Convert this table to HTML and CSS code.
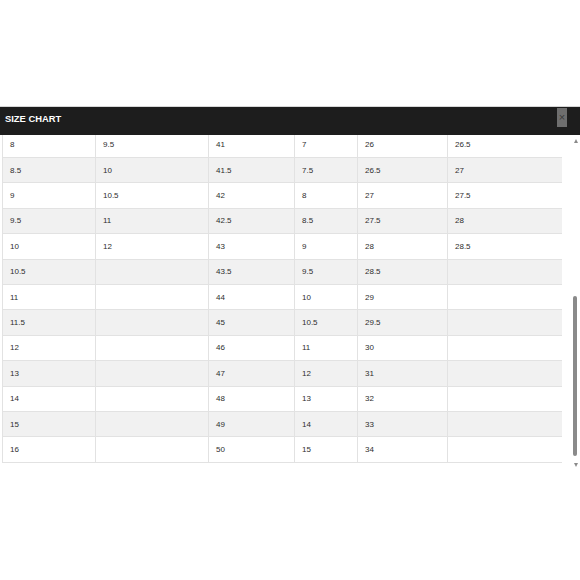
FILE: index.html
```html
<!DOCTYPE html>
<html>
<head>
<meta charset="utf-8">
<link rel="stylesheet" href="styles.css">
</head>
<body>
<div class="modal">
  <div class="modal-head">
    <span class="title">SIZE CHART</span>
    <button class="close">×</button>
  </div>
  <div class="modal-body">
    <div class="scroll-area">
      <table class="chart">
        <colgroup>
          <col style="width:93px"><col style="width:113px"><col style="width:86px"><col style="width:63px"><col style="width:90px"><col style="width:115px">
        </colgroup>
        <tbody>
          <tr><td>8</td><td>9.5</td><td>41</td><td>7</td><td>26</td><td>26.5</td></tr>
          <tr><td>8.5</td><td>10</td><td>41.5</td><td>7.5</td><td>26.5</td><td>27</td></tr>
          <tr><td>9</td><td>10.5</td><td>42</td><td>8</td><td>27</td><td>27.5</td></tr>
          <tr><td>9.5</td><td>11</td><td>42.5</td><td>8.5</td><td>27.5</td><td>28</td></tr>
          <tr><td>10</td><td>12</td><td>43</td><td>9</td><td>28</td><td>28.5</td></tr>
          <tr><td>10.5</td><td></td><td>43.5</td><td>9.5</td><td>28.5</td><td></td></tr>
          <tr><td>11</td><td></td><td>44</td><td>10</td><td>29</td><td></td></tr>
          <tr><td>11.5</td><td></td><td>45</td><td>10.5</td><td>29.5</td><td></td></tr>
          <tr><td>12</td><td></td><td>46</td><td>11</td><td>30</td><td></td></tr>
          <tr><td>13</td><td></td><td>47</td><td>12</td><td>31</td><td></td></tr>
          <tr><td>14</td><td></td><td>48</td><td>13</td><td>32</td><td></td></tr>
          <tr><td>15</td><td></td><td>49</td><td>14</td><td>33</td><td></td></tr>
          <tr><td>16</td><td></td><td>50</td><td>15</td><td>34</td><td></td></tr>
        </tbody>
      </table>
    </div>
    <div class="scrollbar">
      <span class="arrow up"></span>
      <div class="track"><div class="thumb"></div></div>
      <span class="arrow down"></span>
    </div>
  </div>
</div>
</body>
</html>
```
FILE: styles.css
```css
html, body {
  margin: 0;
  padding: 0;
  background: #ffffff;
  font-family: "Liberation Sans", Arial, sans-serif;
}
.modal {
  margin-top: 106px;
  border-top: 1px solid #d6d6d6;
}
.modal-head {
  height: 28px;
  background: #1d1d1d;
  display: flex;
  align-items: center;
  justify-content: space-between;
  padding: 0 13px 0 5px;
}
.title {
  color: #ffffff;
  font-weight: bold;
  font-size: 9.4px;
  margin-top: -5px;
}
.close {
  width: 10px;
  height: 19px;
  margin-top: -8px;
  padding: 0;
  border: 0;
  background: #6e6e6e;
  color: #3a3a3a;
  font-size: 11px;
  line-height: 19px;
  font-family: "Liberation Sans", Arial, sans-serif;
}
.modal-body {
  display: flex;
  height: 336px;
}
.scroll-area {
  width: 562px;
  overflow: hidden;
  padding-left: 2px;
  box-sizing: border-box;
}
.chart {
  border-collapse: collapse;
  table-layout: fixed;
  width: 560px;
  margin-top: -3.4px;
  color: #2e2e2e;
  font-size: 8px;
}
.chart td {
  height: 25.4px;
  padding: 0 7px;
  border: 1px solid #e2e2e2;
  box-sizing: border-box;
  vertical-align: middle;
}
.chart tr:nth-child(even) td {
  background: #f1f1f1;
}
.scrollbar {
  width: 18px;
  display: flex;
  flex-direction: column;
  align-items: flex-end;
  padding: 4px 3px 0 0;
  box-sizing: border-box;
}
.arrow {
  width: 0;
  height: 0;
  border-left: 2.5px solid transparent;
  border-right: 2.5px solid transparent;
  margin-right: -0.5px;
}
.arrow.up {
  border-bottom: 4px solid #8a8a8a;
}
.arrow.down {
  border-top: 4px solid #8a8a8a;
}
.track {
  height: 320px;
  width: 4px;
  padding-top: 153px;
  box-sizing: border-box;
}
.thumb {
  width: 4px;
  height: 160px;
  border-radius: 2px;
  background: #8a8a8a;
}
```
